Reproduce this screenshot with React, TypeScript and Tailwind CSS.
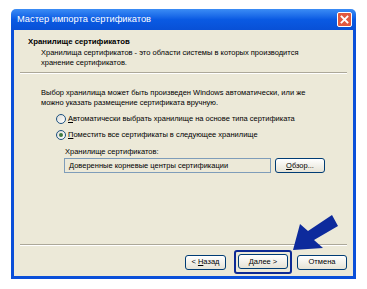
import React from 'react';

function XpButton({ children, className = '' }: { children: React.ReactNode; className?: string }) {
  return (
    <div
      className={`h-[15px] flex items-center justify-center rounded-[3px] border border-[#003c74] bg-gradient-to-b from-white to-[#e6e3d6] text-[7.5px] leading-none text-black ${className}`}
    >
      {children}
    </div>
  );
}

function Radio({ checked }: { checked?: boolean }) {
  return (
    <span className="w-[10px] h-[10px] rounded-full border border-[#1c5180] bg-gradient-to-br from-[#dcdcd7] to-white flex items-center justify-center shrink-0">
      {checked && <span className="w-[4px] h-[4px] rounded-full bg-[#3f7a3f]" />}
    </span>
  );
}

export default function App() {
  return (
    <div
      className="relative w-[367px] h-[289px] bg-white overflow-hidden"
      style={{ fontFamily: '"Liberation Sans", Arial, sans-serif' }}
    >
      <div className="absolute left-[11px] top-[9px] w-[345px] h-[270px] flex flex-col">
        {/* title bar */}
        <div className="h-[21px] rounded-t-[5px] bg-gradient-to-b from-[#3b8cf5] via-[#0a5ae3] to-[#0850d6] flex items-center pl-[6px] pr-[4px]">
          <span className="text-white text-[9.3px] leading-none">Мастер импорта сертификатов</span>
          <div className="ml-auto w-[15px] h-[15px] rounded-[2px] border border-white bg-[#e2583e] flex items-center justify-center">
            <svg width="9" height="9" viewBox="0 0 9 9">
              <path d="M1.5 1.5 L7.5 7.5 M7.5 1.5 L1.5 7.5" stroke="white" strokeWidth="1.8" strokeLinecap="square" />
            </svg>
          </div>
        </div>

        {/* body */}
        <div className="flex-1 border-x-[3px] border-b-[3px] border-[#0a4fd9] bg-[#ece9d8] flex flex-col text-[7.5px] leading-[10px] text-black">
          <div className="pt-[7px] pl-[14px]">
            <div className="font-bold text-[7.8px]">Хранилище сертификатов</div>
            <div className="pl-[13px] mt-[1px]">
              Хранилища сертификатов - это области системы в которых производится
              <br />
              хранение сертификатов.
            </div>
          </div>
          <div className="mx-[6px] mt-[4px] border-t border-[#aca899] border-b border-b-white" />

          <div className="pl-[27px] pt-[14px]">
            <div>
              Выбор хранилища может быть произведен Windows автоматически, или же
              <br />
              можно указать размещение сертификата вручную.
            </div>
            <div className="pl-[15px] mt-[6px] flex flex-col gap-[6px]">
              <div className="flex items-center gap-[2px]">
                <Radio />
                <span>
                  <span className="underline">А</span>втоматически выбрать хранилище на основе типа сертификата
                </span>
              </div>
              <div className="flex items-center gap-[2px]">
                <Radio checked />
                <span>
                  <span className="underline">П</span>оместить все сертификаты в следующее хранилище
                </span>
              </div>
            </div>
            <div className="pl-[23px] mt-[7px]">
              <div className="pl-[1px]">Хранилище сертификатов:</div>
              <div className="flex items-center mt-[1px] gap-[4px]">
                <div className="w-[207px] h-[15px] border border-[#7f9db9] bg-[#ece9d8] pl-[4px] flex items-center">
                  Доверенные корневые центры сертификации
                </div>
                <XpButton className="w-[50px]">
                  <span className="underline">О</span>бзор...
                </XpButton>
              </div>
            </div>
          </div>

          <div className="flex-1" />
          <div className="mx-[6px] border-t border-[#aca899] border-b border-b-white" />
          <div className="flex items-center justify-end pr-[6px] pt-[4px] pb-[2px]">
            <XpButton className="w-[41px]">
              &lt; <span className="underline ml-[2px]">Н</span>азад
            </XpButton>
            <div className="ml-[8px] rounded-[3px] border-2 border-[#0d2a94] p-[2px] pb-[3px]">
              <XpButton className="w-[50px]">
                <span className="underline">Д</span>алее &gt;
              </XpButton>
            </div>
            <XpButton className="w-[50px] ml-[5px]">Отмена</XpButton>
          </div>
        </div>
      </div>

      {/* annotation arrow */}
      <svg className="absolute left-0 top-0" width="367" height="289" viewBox="0 0 367 289">
        <polygon
          points="293,250 300,224 308,231 332,215 338,226 314,240 323,248"
          fill="#0d2a9c"
        />
      </svg>
    </div>
  );
}
